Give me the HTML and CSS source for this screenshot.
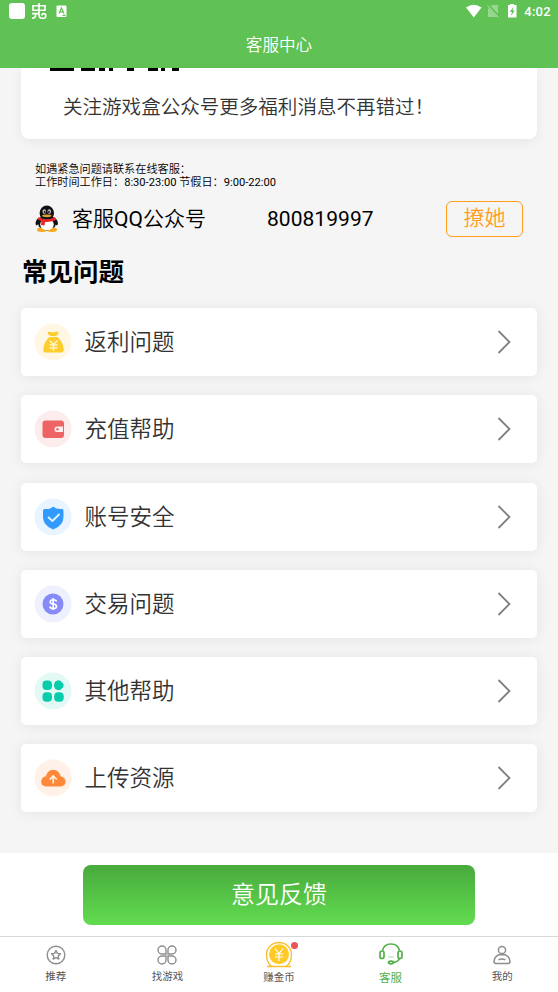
FILE: index.html
```html
<!DOCTYPE html>
<html lang="zh-CN">
<head>
<meta charset="utf-8">
<title>客服中心</title>
<link rel="stylesheet" href="styles.css">
</head>
<body>
<header class="header">
  <div class="status">
    <svg class="status-left" width="62" height="24" viewBox="0 0 62 24">
      <rect x="1" y="3" width="16" height="16" rx="3" fill="#fff"/>
      <g fill="none" stroke="#fff" stroke-width="1.600"><path d="M25 5.800H37V10.300H25ZM31 3V14.500Q31 18.200 34 18.200H35.500Q37.800 18.200 37.800 15.800Q37.800 13.600 35.800 13.600Q33.800 13.600 33.800 15.500M24 13.600H31M27.500 13.600V15.500Q27.500 18.200 24 18.200"/></g>
      <rect x="48.500" y="5.500" width="10" height="11.500" rx="1" fill="#fff"/>
      <path d="M51 13.500L53.500 8L56 13.500M52 11.800H55M54.500 15.300H57.500" fill="none" stroke="#60c254" stroke-width="1.200"/>
    </svg>
    <div class="status-right">
      <svg width="54" height="18" viewBox="0 0 54 18">
        <path d="M0 4.500Q7.500-1 15.500 4.500L7.800 14.500Z" fill="#fff"/>
        <path d="M26 2H32V14H22V6Z" fill="#fff" opacity=".35"/>
        <path d="M22 2L33 14" stroke="#60c254" stroke-width="2.600"/><path d="M21.500 2.500L32.500 14.500" stroke="#fff" stroke-width="1" opacity=".5"/>
        <path d="M42 2H44V1H48V2H50.500V14.500H42Z" fill="#fff"/>
        <path d="M47.500 3.500L44 9H46L45 13L48.700 7.500H46.600Z" fill="#60c254"/>
      </svg>
      <span class="clock">4:02</span>
    </div>
  </div>
  <h1 class="title">客服中心</h1>
</header>
<main class="content">
  <section class="notice">
    <svg class="clipped" width="132" height="3" viewBox="0 0 132 3"><path d="M0 0H24V3H0ZM31 0H45V3H31ZM49 0H55V3H49ZM59 0H63V3H59ZM77 0H84V3H77ZM98 0H108V3H98ZM111 0H115V3H111ZM122 0H129V3H122Z"/></svg>
    <p class="notice-text">关注游戏盒公众号更多福利消息不再错过！</p>
  </section>
  <p class="hours">如遇紧急问题请联系在线客服：<br>工作时间工作日：<span class="latin">8:30-23:00</span> 节假日：<span class="latin">9:00-22:00</span></p>
  <div class="contact">
    <svg width="24" height="28" viewBox="0 0 24 28">
      <path d="M3 13Q-1 18 1.500 20.500L5 18ZM20.500 13Q24.500 18 22 20.500L18 18Z" fill="#111"/>
      <ellipse cx="12" cy="18" rx="9" ry="8" fill="#111"/>
      <ellipse cx="7" cy="24.800" rx="5" ry="2.200" fill="#f6a81c"/><ellipse cx="17" cy="24.800" rx="5" ry="2.200" fill="#f6a81c"/>
      <ellipse cx="12" cy="19.500" rx="6.800" ry="5.700" fill="#fff"/>
      <ellipse cx="11.800" cy="8" rx="7.200" ry="7.500" fill="#111"/>
      <ellipse cx="9.300" cy="6.600" rx="1.800" ry="2.300" fill="#bbb"/><ellipse cx="14.300" cy="6.600" rx="1.800" ry="2.300" fill="#bbb"/>
      <circle cx="9.700" cy="6.900" r=".9"/><circle cx="13.900" cy="6.900" r=".9"/>
      <ellipse cx="11.800" cy="10.800" rx="4.800" ry="1.400" fill="#d9a03a"/>
      <path d="M3.500 12Q12 16.500 20 12L21 15Q15 17.500 10 17L9.500 20.500L6 20L6.500 16.200L3 14.500Z" fill="#e6252a"/>
    </svg>
    <span class="contact-name">客服<span class="latin">QQ</span>公众号</span>
    <span class="contact-number latin">800819997</span>
    <a class="chat">撩她</a>
  </div>
  <h2 class="heading">常见问题</h2>
  <ul class="list">
    <li class="row">
      <svg class="icon" viewBox="0 0 38 38"><circle cx="19" cy="19" r="18.500" fill="#fff7e3"/><path d="M13.500 10Q14 8 16.500 9Q19 10 22 8.700Q24 8 24.500 10Q24.500 11.500 22 13H16.500Q14 12 13.500 10ZM15.500 14H23.500Q29 18.500 29.700 26Q30 29.500 27 29.500H12Q9 29.500 9.300 26Q10 18.500 15.500 14Z" fill="#fdcc2d"/><path d="M15.500 17.500L19.500 21.500L23.500 17.500M19.500 21.500V28M15.500 22H23.500M15.500 25H23.500" stroke="#fff4d0" stroke-width="1.300" fill="none"/></svg>
      <span>返利问题</span><svg class="arrow" viewBox="0 0 14 24"><path d="M1.500 1L12.500 12L1.500 23"/></svg>
    </li>
    <li class="row">
      <svg class="icon" viewBox="0 0 38 38"><circle cx="19" cy="19" r="18.500" fill="#fdecec"/><rect x="8.500" y="10.500" width="21.500" height="17.500" rx="3" fill="#ee6465"/><path d="M23 16.500H29V22H23Q20.500 22 20.500 19.200Q20.500 16.500 23 16.500Z" fill="#fff0ee"/><circle cx="23.500" cy="19.200" r="1.200" fill="#ee6465"/></svg>
      <span>充值帮助</span><svg class="arrow" viewBox="0 0 14 24"><path d="M1.500 1L12.500 12L1.500 23"/></svg>
    </li>
    <li class="row">
      <svg class="icon" viewBox="0 0 38 38"><circle cx="19" cy="19" r="18.500" fill="#e8f4ff"/><path d="M19.200 8.500Q22 11.500 28 11Q29.500 11 29.500 13V19Q29.500 27.500 19.200 31.500Q9 27.500 9 19V13Q9 11 10.500 11Q16.500 11.500 19.200 8.500Z" fill="#319aff"/><path d="M14 19L18.500 23L25.500 16" fill="none" stroke="#e4f5ff" stroke-width="1.800"/></svg>
      <span>账号安全</span><svg class="arrow" viewBox="0 0 14 24"><path d="M1.500 1L12.500 12L1.500 23"/></svg>
    </li>
    <li class="row">
      <svg class="icon" viewBox="0 0 38 38"><circle cx="19" cy="19" r="18.500" fill="#eff0fe"/><circle cx="19" cy="19" r="10.500" fill="#868bf8"/><path d="M22.500 16.500Q22 14.800 19.200 14.800Q16.200 14.800 16.200 16.900Q16.200 18.800 19.200 19Q22.500 19.300 22.500 21.400Q22.500 23.500 19.200 23.500Q16.200 23.500 15.800 21.500M19.200 13V25" fill="none" stroke="#fff" stroke-width="1.600"/></svg>
      <span>交易问题</span><svg class="arrow" viewBox="0 0 14 24"><path d="M1.500 1L12.500 12L1.500 23"/></svg>
    </li>
    <li class="row">
      <svg class="icon" viewBox="0 0 38 38"><circle cx="19" cy="19" r="18.500" fill="#e3f9f5"/><g fill="#05ccab"><rect x="8.500" y="8.500" width="9.500" height="9.500" rx="4"/><path d="M25 8.200Q26 8.200 29 11.200Q30.500 13.200 29 15.200Q26.500 18.200 25 18.200Q20 18 20 13.200Q20 8.400 25 8.200Z"/><rect x="8.500" y="20.200" width="9.500" height="9.500" rx="4"/><rect x="20.200" y="20.200" width="9.500" height="9.500" rx="4"/></g></svg>
      <span>其他帮助</span><svg class="arrow" viewBox="0 0 14 24"><path d="M1.500 1L12.500 12L1.500 23"/></svg>
    </li>
    <li class="row">
      <svg class="icon" viewBox="0 0 38 38"><circle cx="19" cy="19" r="18.500" fill="#fff1e8"/><path d="M12 27.500Q7.200 27 7.200 22.500Q7.200 18.500 11.800 17.300Q13.500 10.800 19.200 10.800Q25 10.800 26.700 17.300Q31.500 18.500 31.500 22.500Q31.500 27 26.500 27.500Z" fill="#ff8938"/><path d="M19.200 24.500V17.500M15.700 20.500L19.200 17L22.700 20.500" fill="none" stroke="#fff5e8" stroke-width="1.600"/></svg>
      <span>上传资源</span><svg class="arrow" viewBox="0 0 14 24"><path d="M1.500 1L12.500 12L1.500 23"/></svg>
    </li>
  </ul>
</main>
<div class="action"><button class="feedback">意见反馈</button></div>
<nav class="tabs">
  <a class="tab"><svg width="20" height="20" viewBox="0 0 20 20"><g fill="none" stroke="#8d8d8d" stroke-width="1.400"><circle cx="10" cy="10" r="8.800"/><path stroke-linejoin="round" d="M10 5.600L11.400 8.400L14.500 8.800L12.200 11L12.800 14.100L10 12.600L7.200 14.100L7.800 11L5.500 8.800L8.600 8.400Z"/></g></svg><span>推荐</span></a>
  <a class="tab"><svg width="20" height="20" viewBox="0 0 20 20"><path fill="none" stroke="#8d8d8d" stroke-width="1.400" d="M9 9H5A4 4 0 1 1 9 5ZM11 9V5A4 4 0 1 1 15 9ZM9 11V15A4 4 0 1 1 5 11ZM11 11H15A4 4 0 1 1 11 15Z"/></svg><span>找游戏</span></a>
  <a class="tab coin"><svg width="34" height="28" viewBox="0 0 34 28"><path d="M5 25.500H10Q4.500 22 4.500 13.500A12.500 12 0 0 1 29.500 13.500Q29.500 22 24 25.500H29M10 25.500H24" fill="#fff" stroke="#f8be2d" stroke-width="1.300"/><circle cx="17" cy="13.300" r="10" fill="#ffc928"/><path d="M13 7.500L17 12.500L21 7.500M17 12.500V20M13 13H21M13 16H21" stroke="#fff" stroke-width="1.200" fill="none"/></svg><i class="badge"></i><span>赚金币</span></a>
  <a class="tab active"><svg width="26" height="24" viewBox="0 0 26 24"><g fill="none" stroke="#53b04b" stroke-width="1.700"><path d="M4.500 8.500Q6 2 13 2Q20 2 21.500 8.500"/><rect x="2" y="9" width="4" height="7.500" rx="2"/><rect x="20" y="9" width="4" height="7.500" rx="2"/><path d="M21.500 16.500Q20 20 15.500 20.500"/><ellipse cx="13" cy="20.500" rx="2.500" ry="1.300"/></g><path d="M10.500 15H15.500" stroke="#a5d6a0"/></svg><span>客服</span></a>
  <a class="tab"><svg width="20" height="20" viewBox="0 0 20 20"><g fill="none" stroke="#8d8d8d" stroke-width="1.500"><circle cx="10" cy="5" r="3.600"/><path d="M6.500 9.800H13.500Q17.800 12 18 16.500Q18 18.500 16 18.500H4Q2 18.500 2 16.500Q2.200 12 6.500 9.800ZM6.500 14.800Q10 13 13.500 14.800"/></g></svg><span>我的</span></a>
</nav>
</body>
</html>
```
FILE: styles.css
```css
* { box-sizing: border-box; }
body {
  margin: 0;
  height: 992px;
  display: flex;
  flex-direction: column;
  overflow: hidden;
  background: #f5f5f5;
  color: #000;
  font-family: Roboto, "Noto Sans CJK SC", sans-serif;
  font-weight: 350;
}
h1, h2, p, ul { margin: 0; padding: 0; font-weight: inherit; }
svg { display: block; flex: none; }
.latin { font-weight: 400; }
.header { height: 68px; background: #60c254; color: #fff; flex: none; }
.status { height: 24px; display: flex; justify-content: space-between; padding: 0 7px 0 8px; }
.status-right { display: flex; align-items: center; gap: 4px; }
.clock { font-size: 13px; font-weight: 500; line-height: 24px; letter-spacing: .3px; }
.title { font-size: 16.6px; line-height: 42px; padding-top: 1px; text-align: center; }
.content { height: 785px; flex: none; }
.notice {
  height: 71px;
  margin: 0 21px;
  background: #fff;
  border-radius: 0 0 8px 8px;
  box-shadow: 0 3px 12px rgba(0, 0, 0, .06);
}
.clipped { margin-left: 28.500px; }
.notice-text { padding-left: 42px; font-size: 19.55px; line-height: 30px; padding-top: 22px; color: #333; white-space: nowrap; }
.hours { margin: 24px 0 0 35px; font-size: 11.15px; line-height: 13px; }
.contact { display: flex; align-items: center; height: 36px; margin-top: 12px; padding: 0 35px; font-size: 21px; }
.contact-name { margin: -4px 0 0 13px; width: 195px; }
.contact-number { letter-spacing: .04px; margin-top: -1px; }
.chat {
  margin-left: auto;
  width: 77px;
  height: 36px;
  border: 1px solid #ff9e1b;
  border-radius: 6px;
  color: #ff9e1b;
  line-height: 33px;
  text-align: center;
}
.heading { margin: 16px 0 0 22px; font-size: 25.5px; font-weight: 700; line-height: 38px; }
.list { list-style: none; margin: 17px 21px 0; display: grid; gap: 19.3px; }
.row {
  height: 68px;
  display: flex;
  align-items: center;
  padding: 0 26px 0 13px;
  background: #fff;
  border-radius: 5px;
  box-shadow: 0 1px 14px rgba(0, 0, 0, .07);
  color: #333;
  font-size: 22.5px;
}
.row span { margin-top: -4px; }
.icon { width: 38px; height: 38px; margin-right: 12.5px; }
.arrow { width: 14px; height: 24px; margin-left: auto; fill: none; stroke: #808080; stroke-width: 1.8; }
.action { height: 83px; flex: none; background: #fff; padding-top: 12px; }
.feedback {
  display: block;
  width: 392px;
  height: 60px;
  margin: 0 auto;
  padding: 0;
  border: 0;
  border-radius: 8px;
  background: linear-gradient(#48aa3c, #62dc50);
  color: #fff;
  font: 350 24px/60px Roboto, "Noto Sans CJK SC", sans-serif;
}
.tabs { height: 56px; flex: none; display: grid; grid-template-columns: repeat(5, 1fr); border-top: 1px solid #d5d9d7; background: #fff; font-weight: 400; }
.tab { position: relative; display: flex; flex-direction: column; align-items: center; padding-top: 8px; font-size: 10.5px; line-height: 16px; color: #555; }
.tab span { margin-top: 4px; }
.coin { padding-top: 4px; }
.coin span { margin-top: 1px; }
.badge { position: absolute; left: 68px; top: 5px; width: 7px; height: 7px; border-radius: 50%; background: #e95458; }
.active { padding-top: 5px; color: #53b04b; font-size: 11.5px; }
```
